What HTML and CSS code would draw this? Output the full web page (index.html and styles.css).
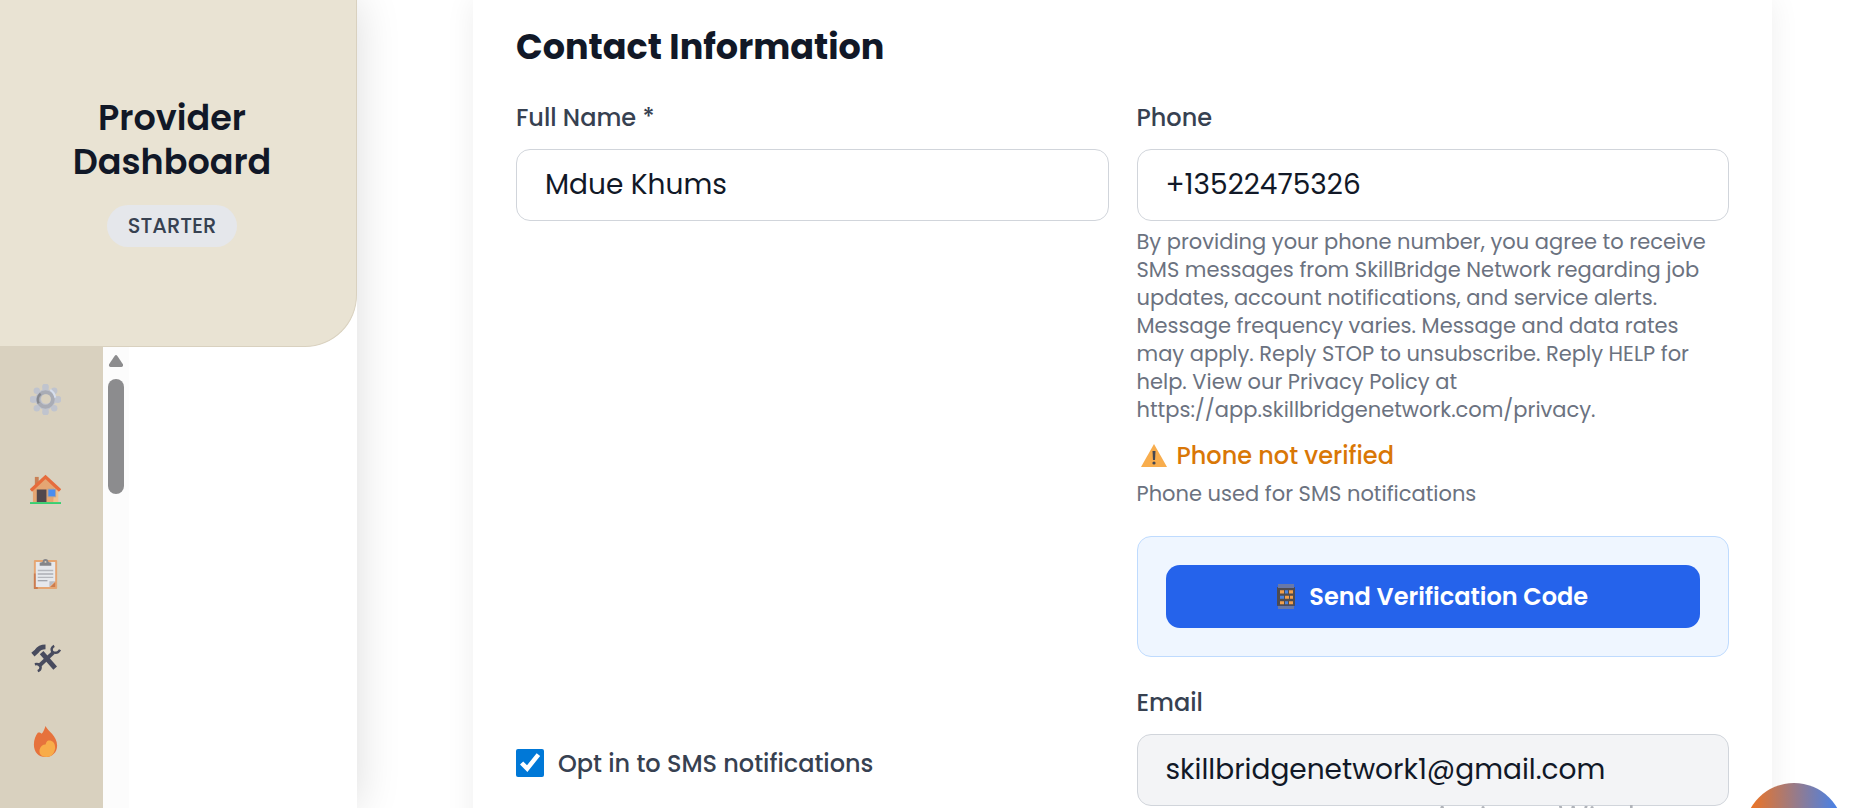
FILE: index.html
```html
<!DOCTYPE html>
<html lang="en">
<head>
<meta charset="utf-8">
<title>Provider Dashboard</title>
<link rel="stylesheet" href="styles.css">
</head>
<body>
<aside class="sidebar">
  <header class="brand">
    <h1 class="brand-title">Provider Dashboard</h1>
    <span class="plan">STARTER</span>
  </header>
  <div class="sidebar-body">
    <nav class="rail" aria-label="Main">
      <button class="rail-item" type="button" aria-label="Settings">
        <svg viewBox="0 0 32 32"><g fill="#c0c4ce"><circle cx="16" cy="16" r="10.500"/><path d="M13 7 12.500 3a3.500 3.500 0 0 1 7 0L19 7zM13 25l-.5 4a3.500 3.500 0 0 0 7 0L19 25zM7 13l-4-.5a3.500 3.500 0 0 0 0 7L7 19zM25 13l4-.5a3.500 3.500 0 0 1 0 7L25 19z"/><circle cx="7" cy="7" r="3.300"/><circle cx="25" cy="7" r="3.300"/><circle cx="7" cy="25" r="3.300"/><circle cx="25" cy="25" r="3.300"/></g><circle cx="16" cy="16" r="7.500" fill="none" stroke="#a9acb5" stroke-width="4"/><path d="M9 20a8 8 0 0 1 2-10" fill="none" stroke="#85888f" stroke-width="2.500"/><circle cx="16.500" cy="15.500" r="5" fill="#d9d1bf"/><path d="M21 6a11 11 0 0 1 5 8" stroke="#d7dfee" stroke-width="2" fill="none"/></svg>
      </button>
      <button class="rail-item" type="button" aria-label="Home">
        <svg viewBox="0 0 32 32"><path d="M5 3h4v10H5z" fill="#c98055"/><path d="M3 16 16 4l13 12v13H3z" fill="#e5a673"/><path d="M25 14l4 3v12h-5z" fill="#f0c08c"/><path d="M7 16h10v13H7z" fill="#51474c"/><path d="M18 15h9v9h-9z" fill="#b7a595"/><path d="M19 16h7v7h-7z" fill="#4a8df0"/><path d="M1 17 16 3l15 14" fill="none" stroke="#e66c3c" stroke-width="3.400"/><path d="M0 29h32v2H0z" fill="#37cf70"/></svg>
      </button>
      <button class="rail-item" type="button" aria-label="Jobs">
        <svg viewBox="0 0 32 32"><rect x="4" y="2" width="24" height="30" rx="1" fill="#e5a673"/><path d="M4 16h4v16H4z" fill="#cb7c4f"/><path d="M6 4h20v20l-6 6H6z" fill="#e6e8ec"/><path d="M26 24h-6v6z" fill="#b9bcc4"/><path d="M26 25v5h-5z" fill="#cb7c4f"/><path d="M10 8V5l3-1a3 3 0 0 1 6 0l3 1v3z" fill="#858589"/><circle cx="16" cy="4" r="1" fill="#d9d1bf"/><path d="M8 13h16M8 20h16" stroke="#b5b7bd" stroke-width="1.500"/><path d="M8 16.500h16M8 23.500h10" stroke="#8d9098" stroke-width="1.200"/></svg>
      </button>
      <button class="rail-item" type="button" aria-label="Services">
        <svg viewBox="0 0 32 32" fill="none" stroke="#484b5e"><path d="m12 11 14 16" stroke-width="5"/><path d="M9 25 24 11" stroke-width="4"/><path d="M3 13 7 9.500Q10 5 16 5" stroke-width="5"/><path d="M25 4q-4 2-2 6 5 3 8-2M5 23q5-1 6 3 0 3-3 4" stroke-width="2.500"/></svg>
      </button>
      <button class="rail-item" type="button" aria-label="Hot leads">
        <svg viewBox="0 0 32 32"><path d="M16 0c2 5 12 10 12 20 0 7-5 12-12 12S4 27 4 19c0-5 2-9 4-12 2-1 3 0 4 1 2-2 3-5 4-8z" fill="#e6723c"/><path d="M20 15c3 0 6 2 6 8-1 6-4 9-9 9-6 0-8-4-7-8 1-3 3-5 6-5 1-2 1-4 4-4z" fill="#f8ac49"/></svg>
      </button>
    </nav>
    <div class="scroll-track" aria-hidden="true">
      <svg class="scroll-up" viewBox="0 0 16 13"><path d="M6.500 1Q8-1 9.500 1L15.500 10Q16 13 14 13H2Q0 13 .5 10z" fill="#8c8c8e"/></svg>
      <div class="scroll-thumb"></div>
    </div>
  </div>
</aside>

<main class="page">
  <form class="card">
    <h2 class="card-title">Contact Information</h2>
    <div class="fields">
      <div class="field">
        <label class="label" for="name">Full Name *</label>
        <input class="input" id="name" type="text" value="Mdue Khums">
      </div>
      <div class="field">
        <label class="label" for="phone">Phone</label>
        <input class="input" id="phone" type="tel" value="+13522475326">
        <p class="hint">By providing your phone number, you agree to receive SMS messages from SkillBridge Network regarding job updates, account notifications, and service alerts. Message frequency varies. Message and data rates may apply. Reply STOP to unsubscribe. Reply HELP for help. View our Privacy Policy at https://app.skillbridgenetwork.com/privacy.</p>
        <p class="status">
          <svg class="warn" viewBox="0 0 26 24"><path d="M13 0 26 23H0z" fill="#f8ad4d"/><path d="M11.500 7h3l-.5 9h-2z" fill="#454752"/><circle cx="13" cy="19" r="1.600" fill="#454752"/></svg>
          Phone not verified
        </p>
        <p class="note">Phone used for SMS notifications</p>
        <div class="verify">
          <button class="send" type="button">
            <svg class="handset" viewBox="0 0 18 32" preserveAspectRatio="none"><path d="M0 4h18v24H0z" fill="#4e4b50"/><path d="M1 0h16v5H1zM1 28h16v4H1z" fill="#6878a8"/><g fill="#f2a04c"><path d="M3 8h4v4H3zM12 8h4v4h-4zM8 15h4v4H8zM13 15h3v4h-3zM3 22h4v4H3zM12 22h4v4h-4z"/></g><g fill="#4c83dd"><path d="M8 8h3v4H8zM3 15h4v4H3zM8 22h3v4H8z"/></g></svg>
            Send Verification Code
          </button>
        </div>
      </div>
      <div class="opt">
        <input class="check" id="sms" type="checkbox" checked>
        <label class="label" for="sms">Opt in to SMS notifications</label>
      </div>
      <div class="field">
        <label class="label" for="email">Email</label>
        <input class="input readonly" id="email" type="email" value="skillbridgenetwork1@gmail.com" readonly>
      </div>
    </div>
  </form>
</main>
<div class="watermark">Activate Windows</div>
<button class="fab" type="button" aria-label="Open assistant"></button>
</body>
</html>
```
FILE: styles.css
```css
* { box-sizing: border-box; }
body {
  margin: 0;
  height: 100vh;
  overflow: hidden;
  display: flex;
  background: #fff;
  color: #111827;
  font-family: Poppins, Inter, "Open Sans", sans-serif;
}
h1, h2, p { margin: 0; }
button, input { font: inherit; color: inherit; }

.sidebar {
  flex: 0 0 357px;
  display: flex;
  flex-direction: column;
  background: #fff;
  box-shadow: 0 0 42px rgba(0, 0, 0, .14);
}
.brand {
  height: 347px;
  padding: 0 40px 4px 28px;
  display: flex;
  flex-direction: column;
  align-items: center;
  justify-content: center;
  gap: 21px;
  background: #e9e3d3;
  border: solid #d9d1bf;
  border-width: 0 1px 1px 0;
  border-bottom-right-radius: 52px;
  text-align: center;
}
.brand-title { font-size: 35px; line-height: 44px; font-weight: 600; }
.plan {
  padding: 7px 21px;
  border-radius: 21px;
  background: #e5e7eb;
  color: #374151;
  font-size: 21px;
  line-height: 28px;
  font-weight: 500;
}
.sidebar-body { flex: 1; display: flex; }
.rail {
  width: 103px;
  padding: 10px 12px 0 0;
  display: flex;
  flex-direction: column;
  background: #d9d1bf;
}
.rail-item {
  flex: 0 0 84px;
  display: flex;
  align-items: center;
  justify-content: center;
  padding: 0;
  border: 0;
  background: none;
}
.rail-item:first-child { margin-bottom: 6px; }
.rail-item svg { width: 31px; height: 31px; }
.scroll-track {
  width: 26px;
  padding-top: 8px;
  display: flex;
  flex-direction: column;
  align-items: center;
  gap: 12px;
  background: #fcfcfc;
}
.scroll-up { width: 16px; height: 12px; }
.scroll-thumb { width: 16px; height: 115px; border-radius: 8px; background: #8c8c8e; }

.page { flex: 1; padding: 0 86px 0 116px; }
.card {
  min-height: 100vh;
  padding: 26px 43px 42px;
  background: #fff;
  box-shadow: 0 0 28px rgba(0, 0, 0, .07);
}
.card-title { margin-bottom: 32px; font-size: 35px; line-height: 42px; font-weight: 700; }
.fields { display: grid; grid-template-columns: repeat(2, minmax(0, 1fr)); gap: 28px; }
.field { display: flex; flex-direction: column; }
.label { color: #374151; font-size: 24px; line-height: 35px; font-weight: 500; }
.input {
  width: 100%;
  height: 72px;
  margin-top: 14px;
  padding: 0 28px;
  border: 1px solid #d1d5db;
  border-radius: 14px;
  background: #fff;
  font-size: 28px;
}
.readonly { background: #f3f4f6; }
.hint { margin-top: 7px; color: #6b7280; font-size: 21px; line-height: 28px; }
.status {
  display: flex;
  align-items: center;
  gap: 10px;
  margin-top: 14px;
  padding-left: 4px;
  color: #d97706;
  font-size: 24px;
  line-height: 35px;
  font-weight: 500;
}
.warn { width: 26px; height: 24px; }
.note { margin-top: 7px; color: #6b7280; font-size: 21px; line-height: 28px; }
.verify {
  margin-top: 28px;
  padding: 28px;
  border: 1px solid #bfdbfe;
  border-radius: 14px;
  background: #eff6ff;
}
.send {
  width: 100%;
  padding: 14px;
  display: flex;
  align-items: center;
  justify-content: center;
  gap: 14px;
  border: 0;
  border-radius: 14px;
  background: #2563eb;
  color: #fff;
  font-size: 24px;
  line-height: 35px;
  font-weight: 600;
}
.handset { width: 18px; height: 25px; }
.opt { display: flex; align-items: center; gap: 14px; padding-top: 35px; }
.check { width: 28px; height: 28px; margin: 0; accent-color: #0078d7; }

.watermark {
  position: fixed;
  left: 1432px;
  bottom: -30px;
  color: #b0b3b9;
  font: 32px/40px "Open Sans", sans-serif;
}
.fab {
  position: fixed;
  right: 14px;
  bottom: -75px;
  width: 100px;
  height: 100px;
  border: 0;
  border-radius: 50%;
  background: linear-gradient(90deg, #f97316, #3b82f6);
}
```
